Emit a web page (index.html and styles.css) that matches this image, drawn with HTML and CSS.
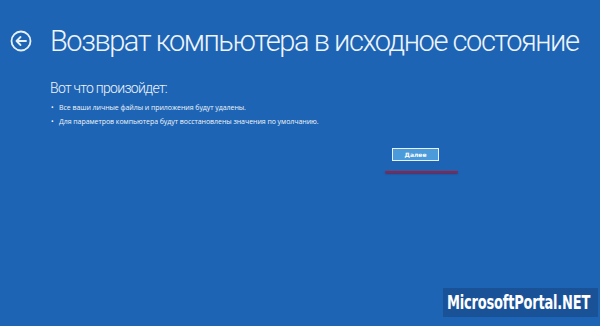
FILE: index.html
```html
<!DOCTYPE html>
<html lang="ru">
<head>
  <meta charset="UTF-8">
  <title>Возврат компьютера в исходное состояние</title>
  <link rel="stylesheet" href="styles.css">
</head>
<body>
  <div class="screen">
    <header class="head">
      <svg class="back" width="22" height="22" viewBox="0 0 22 22">
        <circle cx="11" cy="11" r="9.5" fill="none" stroke="#e8f1fb" stroke-width="1.8"/>
        <path d="M16 11H6.5M10.5 7L6.5 11L10.5 15" fill="none" stroke="#e8f1fb" stroke-width="1.8" stroke-linecap="round" stroke-linejoin="round"/>
      </svg>
      <h1>Возврат компьютера в исходное состояние</h1>
    </header>

    <section class="body">
      <h2>Вот что произойдет:</h2>
      <ul class="list">
        <li>Все ваши личные файлы и приложения будут удалены.</li>
        <li>Для параметров компьютера будут восстановлены значения по умолчанию.</li>
      </ul>
      <div class="actions">
        <button class="next">Далее</button>
        <div class="mark"></div>
      </div>
    </section>
  </div>

  <div class="watermark"><span>MicrosoftPortal.NET</span></div>
</body>
</html>
```

FILE: styles.css
```css
html, body{ margin:0; height:100%; }
body{
  background:#1e64b4;
  color:#eef4fb;
  font-family:"Open Sans", "Noto Sans", sans-serif;
  overflow:hidden;
}
.screen{ padding-top:26px; }
.head{
  display:flex;
  align-items:center;
  gap:18px;
  padding-left:10px;
}
.back{ flex:none; }
h1{
  margin:0;
  font-family:Roboto, "Open Sans", sans-serif;
  font-size:29px;
  font-weight:300;
  line-height:30px;
  letter-spacing:-1.45px;
  white-space:nowrap;
}
.body{ padding-left:50px; }
h2{
  margin:24px 0 0;
  font-family:Roboto, "Open Sans", sans-serif;
  font-size:14px;
  font-weight:300;
  line-height:16px;
  letter-spacing:-0.7px;
}
.list{
  list-style:none;
  margin:5px 0 0;
  padding:0;
  font-size:7px;
  line-height:14px;
  letter-spacing:-0.05px;
}
.list li::before{
  content:"•";
  display:inline-block;
  width:8px;
  margin-left:1px;
}
.actions{
  margin-top:19px;
  margin-left:335px;
  display:flex;
  flex-direction:column;
  align-items:flex-start;
}
.next{
  margin-left:7px;
  width:47px;
  height:13px;
  padding:0;
  border:1px solid #e8f1fb;
  background:#4b9ad9;
  color:#fff;
  font-family:"DejaVu Sans", sans-serif;
  font-size:6px;
  font-weight:bold;
}
.mark{
  margin-top:10px;
  width:73px;
  height:2px;
  background:#9b1f43;
  border-radius:1px;
  box-shadow:0 1px 2px rgba(40,10,40,.4);
}
.watermark{
  position:absolute;
  left:443px;
  top:288px;
  width:155px;
  height:29px;
  box-sizing:border-box;
  padding-left:4px;
  overflow:hidden;
  background:#1a5298;
  color:#fff;
  font-family:"DejaVu Sans", sans-serif;
  font-weight:bold;
  font-size:20px;
  line-height:29px;
  white-space:nowrap;
}
.watermark span{
  display:inline-block;
  transform:scaleX(0.65);
  transform-origin:left center;
  letter-spacing:-0.3px;
}
```
